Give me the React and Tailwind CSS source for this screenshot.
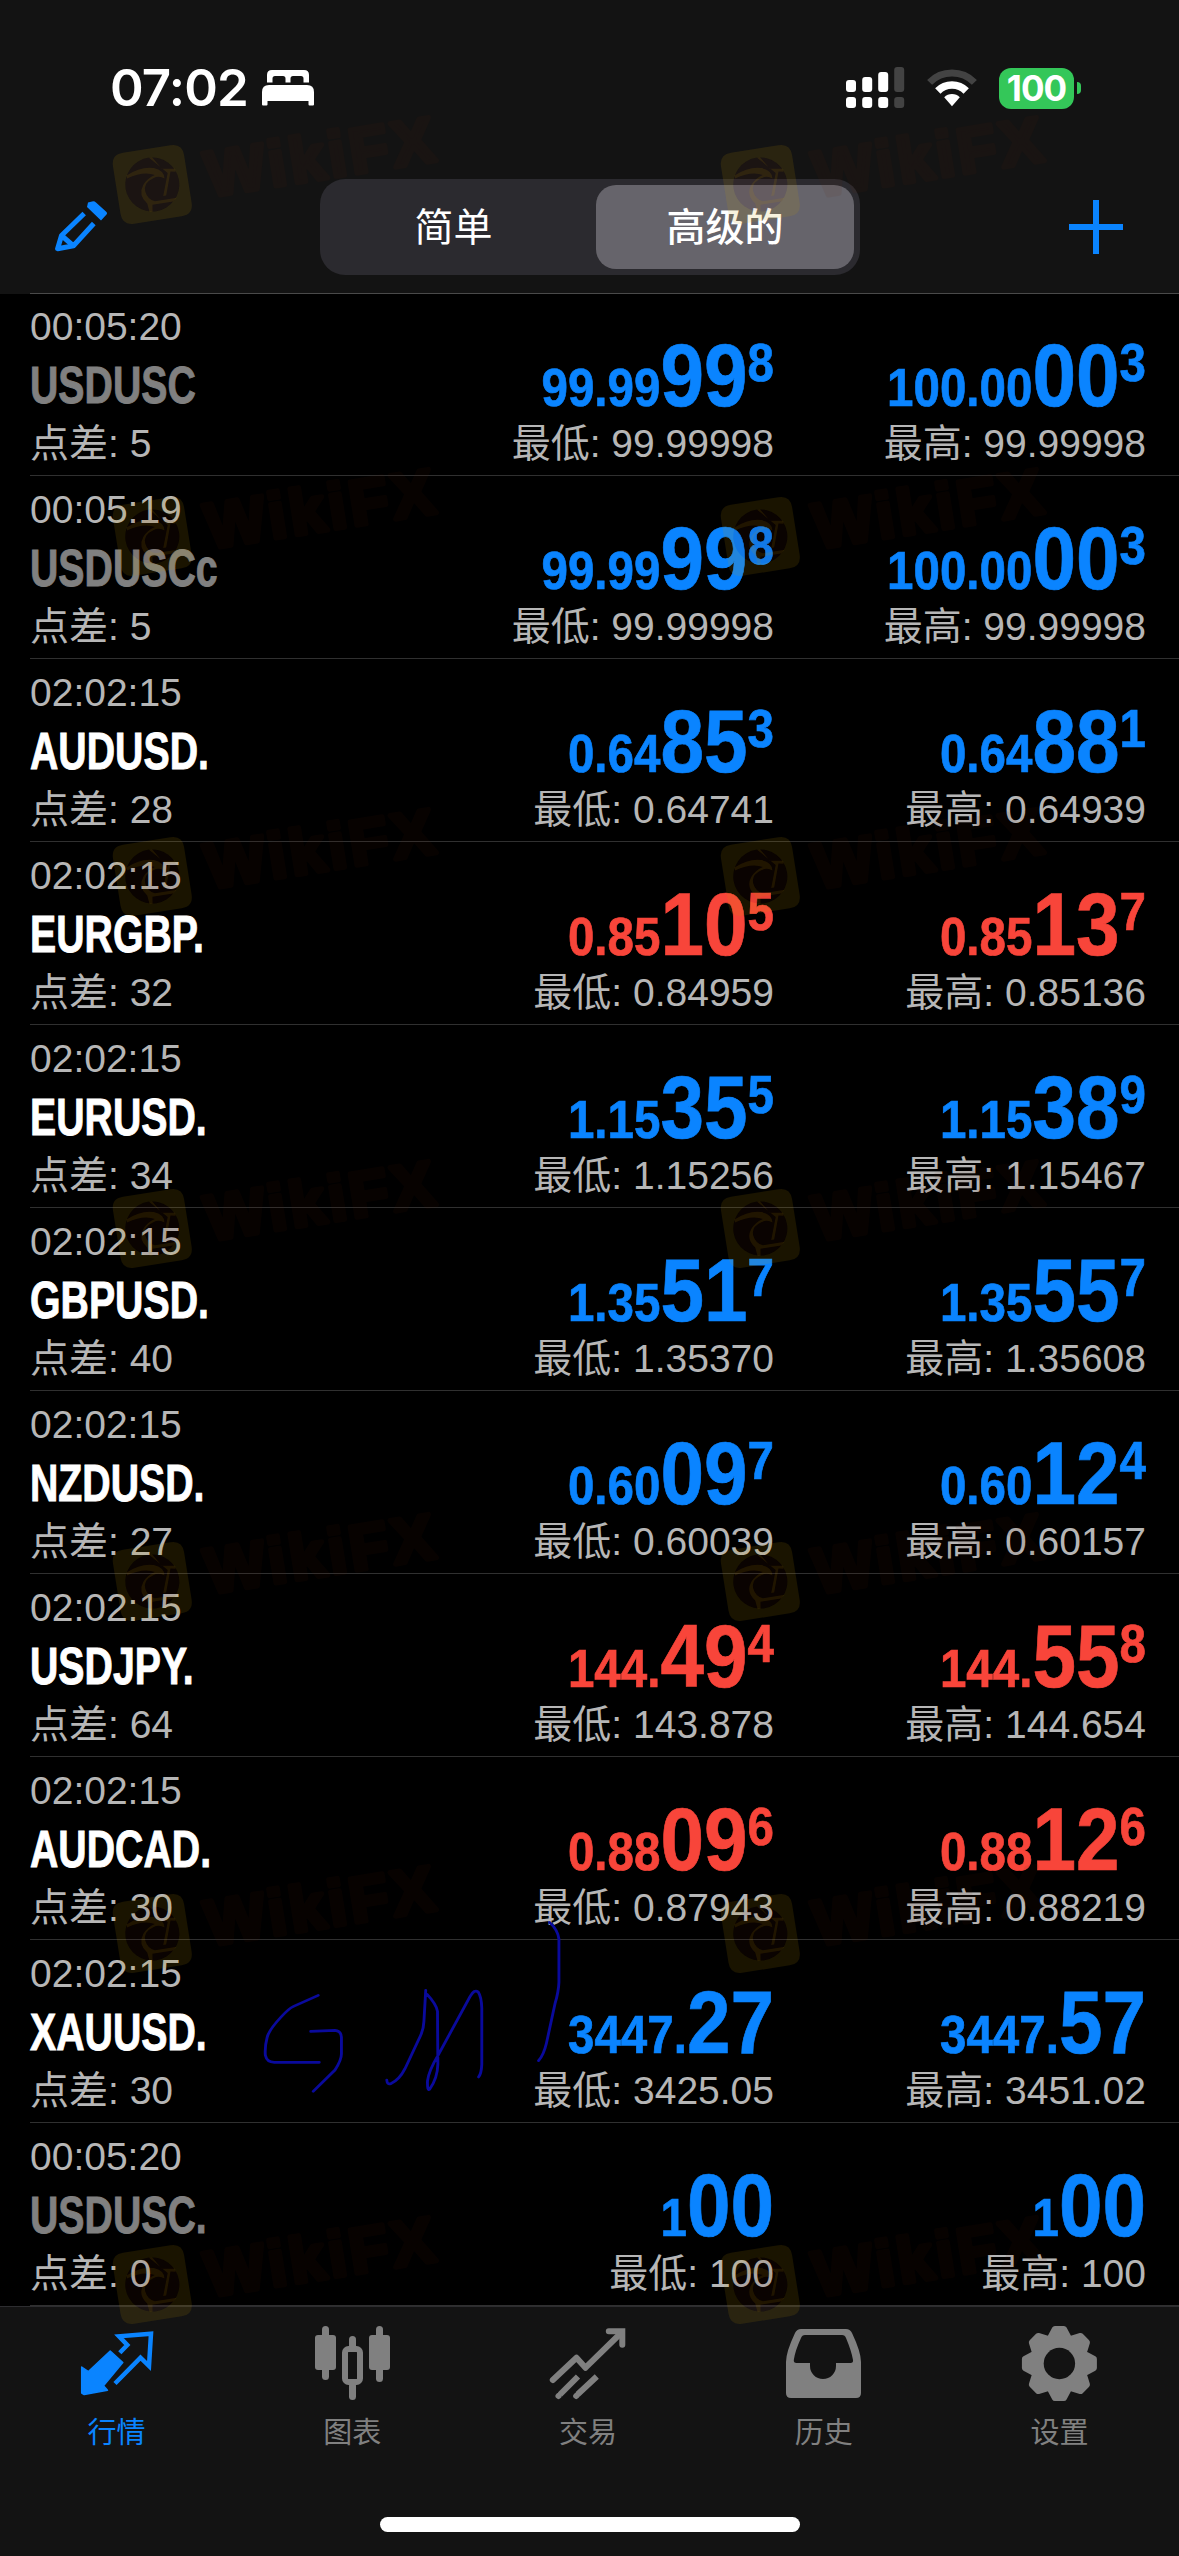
import React from "react";

const quotes = [
  { time: "00:05:20", symbol: "USDUSC", spread: "5", dim: true, bid: ["99.99", "99", "8"], ask: ["100.00", "00", "3"], low: "99.99998", high: "99.99998" },
  { time: "00:05:19", symbol: "USDUSCc", spread: "5", dim: true, bid: ["99.99", "99", "8"], ask: ["100.00", "00", "3"], low: "99.99998", high: "99.99998" },
  { time: "02:02:15", symbol: "AUDUSD.", spread: "28", bid: ["0.64", "85", "3"], ask: ["0.64", "88", "1"], low: "0.64741", high: "0.64939" },
  { time: "02:02:15", symbol: "EURGBP.", spread: "32", down: true, bid: ["0.85", "10", "5"], ask: ["0.85", "13", "7"], low: "0.84959", high: "0.85136" },
  { time: "02:02:15", symbol: "EURUSD.", spread: "34", bid: ["1.15", "35", "5"], ask: ["1.15", "38", "9"], low: "1.15256", high: "1.15467" },
  { time: "02:02:15", symbol: "GBPUSD.", spread: "40", bid: ["1.35", "51", "7"], ask: ["1.35", "55", "7"], low: "1.35370", high: "1.35608" },
  { time: "02:02:15", symbol: "NZDUSD.", spread: "27", bid: ["0.60", "09", "7"], ask: ["0.60", "12", "4"], low: "0.60039", high: "0.60157" },
  { time: "02:02:15", symbol: "USDJPY.", spread: "64", down: true, bid: ["144.", "49", "4"], ask: ["144.", "55", "8"], low: "143.878", high: "144.654" },
  { time: "02:02:15", symbol: "AUDCAD.", spread: "30", down: true, bid: ["0.88", "09", "6"], ask: ["0.88", "12", "6"], low: "0.87943", high: "0.88219" },
  { time: "02:02:15", symbol: "XAUUSD.", spread: "30", bid: ["3447.", "27", ""], ask: ["3447.", "57", ""], low: "3425.05", high: "3451.02" },
  { time: "00:05:20", symbol: "USDUSC.", spread: "0", dim: true, bid: ["1", "00", ""], ask: ["1", "00", ""], low: "100", high: "100" },
];

const watermarkRows = [144, 496, 836, 1188, 1541, 1893, 2244];
const watermarkCols = [112, 720];

function BedIcon() {
  return (
    <svg width="52" height="36" viewBox="0 0 52 36" fill="#fff">
      <path d="M5 12.5V5q0-5 5-5h32q5 0 5 5v7.500h-5.500V8.500q0-2.500-2.500-2.500h-8q-2.500 0-2.500 2.500v4h-5v-4q0-2.500-2.500-2.500h-8q-2.500 0-2.500 2.500v4z" />
      <path d="M0 22q0-7 7-7h38q7 0 7 7v12.500q0 1-1 1h-3.500q-1 0-1-1V31h-41v3.500q0 1-1 1H1q-1 0-1-1z" />
    </svg>
  );
}

function SignalIcon() {
  return (
    <svg width="59" height="42" viewBox="0 0 59 42" fill="#fff">
      <rect x="0" y="13" width="10" height="12" rx="3" />
      <rect x="16.200" y="10" width="10" height="15" rx="3" />
      <rect x="32.200" y="5" width="10" height="20" rx="3" />
      <rect x="48.200" y="0" width="10" height="25" rx="3" fill="#434343" />
      <rect x="0" y="30" width="10" height="11" rx="3" />
      <rect x="16.200" y="30" width="10" height="11" rx="3" />
      <rect x="32.200" y="30" width="10" height="11" rx="3" />
      <rect x="48.200" y="30" width="10" height="11" rx="3" fill="#434343" />
    </svg>
  );
}

function WifiIcon() {
  return (
    <svg width="50" height="38" viewBox="0 0 50 38" fill="none">
      <path d="M2.600 13.400A31.500 31.500 0 0 1 47.400 13.400" stroke="#434343" strokeWidth="7" />
      <path d="M10.800 22A20 20 0 0 1 39.200 22" stroke="#fff" strokeWidth="7.500" />
      <path d="M17.200 28.200a11 11 0 0 1 15.600 0L25 37.200z" fill="#fff" />
    </svg>
  );
}

function PencilIcon() {
  return (
    <svg width="54" height="52" viewBox="0 0 54 52" fill="none">
      <path d="M33 1.600L37 0.500Q39 -0.500 41 1.500L51.500 11Q52.500 12.500 51.500 13.500L46 19.500L32 6z" fill="#0a84ff" />
      <path d="M29.200 12.500L6.500 34.500L2.600 47.700L18.500 44.700L38.800 22.500M6.500 34.500L18 44.500" stroke="#0a84ff" strokeWidth="5" strokeLinejoin="round" />
    </svg>
  );
}

function QuotesIcon() {
  return (
    <svg width="84" height="84" viewBox="0 0 84 84" fill="none">
      <path d="M5.700 43L12.400 47.500L34.200 27L46.800 38.500L27.500 61.700L31.500 66.200L8.200 70.500L5.700 69z" fill="#0a84ff" stroke="#0a84ff" strokeWidth="1.500" strokeLinejoin="round" />
      <path d="M43.800 28.700L51.300 21L43 12.300L75 9.700L73 42L64.500 33.700L39 59.500" stroke="#0a84ff" strokeWidth="4.500" />
    </svg>
  );
}

function ChartIcon() {
  return (
    <svg width="84" height="84" viewBox="0 0 84 84" fill="#808080">
      <rect x="10" y="2" width="7" height="54" rx="3.500" />
      <rect x="3" y="11" width="21" height="35" rx="3" />
      <rect x="64" y="2" width="7" height="56" rx="3.500" />
      <rect x="57" y="11" width="21" height="35" rx="3" />
      <rect x="37" y="12" width="7" height="14" rx="3.500" />
      <rect x="37" y="58" width="7" height="18" rx="3.500" />
      <rect x="33" y="25" width="15" height="33" rx="3.500" fill="none" stroke="#808080" strokeWidth="6" />
    </svg>
  );
}

function TradeIcon() {
  return (
    <svg width="84" height="84" viewBox="0 0 84 84" fill="none" stroke="#808080" strokeWidth="6">
      <path d="M5.800 56L29.500 33.700L38.500 43.700L74.500 8.500" strokeLinecap="round" strokeLinejoin="round" />
      <path d="M61.800 7.300H75.300V20.700" strokeLinecap="round" />
      <path d="M13 70.500L31 52.500M30.500 70.500L49.800 52.500" />
      <path d="M11.500 72l.1-.1M29.200 72l.1-.1" strokeLinecap="round" />
    </svg>
  );
}

function HistoryIcon() {
  return (
    <svg width="84" height="84" viewBox="0 0 84 84" fill="#808080">
      <path
        fillRule="evenodd"
        d="M3 69V38Q3 28 12 9Q14 5 18 5H63Q67 5 69 9Q78 28 78 38V69Q78 74 73 74H8Q3 74 3 69zM22 11Q19 11 18 14Q12 27 10.800 36Q10.500 39 13.500 39H27V42A13 13 0 0 0 53 42V39H67.500Q70.500 39 70 36Q68.500 27 63 14Q62 11 59 11z"
      />
    </svg>
  );
}

function SettingsIcon() {
  return (
    <svg width="84" height="84" viewBox="0 0 84 84">
      <g transform="translate(40.400 39.500)" fill="#808080" stroke="#808080" strokeLinejoin="round">
        <circle r="30" stroke="none" />
        {[0, 45, 90, 135, 180, 225, 270, 315].map((a) => (
          <path key={a} transform={`rotate(${a})`} d="M-8.500 -27L-4.500 -34.500H4.500L8.500 -27z" strokeWidth="6" />
        ))}
        <circle r="15.700" fill="#131313" stroke="none" />
      </g>
    </svg>
  );
}

const tabs = [
  { label: "行情", Icon: QuotesIcon, active: true },
  { label: "图表", Icon: ChartIcon },
  { label: "交易", Icon: TradeIcon },
  { label: "历史", Icon: HistoryIcon },
  { label: "设置", Icon: SettingsIcon },
];

function StatusBar() {
  return (
    <div className="flex h-[176px] items-start justify-between pl-[110px] pr-[98px] pt-[66px]">
      <div className="flex h-[44px] items-center">
        <span className="w-[139px] whitespace-nowrap font-['Inter'] text-[51px] font-semibold leading-[44px] tracking-[-0.8px] text-white">07:02</span>
        <span className="ml-[13px]"><BedIcon /></span>
      </div>
      <div className="flex h-[44px] items-center">
        <SignalIcon />
        <span className="ml-[22px] mr-[22px]"><WifiIcon /></span>
        <div className="flex h-[41px] w-[75px] items-center justify-center rounded-[12px] bg-[#34c759] font-['Inter'] text-[35px] font-bold leading-none tracking-[-1px] text-white">100</div>
        <div className="ml-[3px] h-[12px] w-[4px] rounded-r-full bg-[#34c759]" />
      </div>
    </div>
  );
}

function Toolbar() {
  return (
    <div className="flex items-center justify-between pl-[55px] pr-[56px] pt-[3px]">
      <PencilIcon />
      <div className="ml-[2px] flex h-[96px] w-[540px] rounded-[25px] bg-[#2b2a2f] p-[6px] text-[39px] text-white">
        <div className="flex w-[270px] items-center justify-center pr-[15px] pt-[2px]">简单</div>
        <div className="flex w-[258px] items-center justify-center rounded-[20px] bg-[#66646b] pt-[2px] font-medium">高级的</div>
      </div>
      <svg width="54" height="54" viewBox="0 0 54 54" fill="#0a84ff">
        <path d="M24 0h6v24h24v6H30v24h-6V30H0v-6h24z" />
      </svg>
    </div>
  );
}

function Price({ parts, down }) {
  return (
    <div className={`h-[90px] origin-right scale-x-[0.88] whitespace-nowrap text-right text-[54px] font-bold leading-[90px] [-webkit-text-stroke:0.7px_currentColor] ${down ? "text-[#f8453a]" : "text-[#0a84ff]"}`}>
      <span>{parts[0]}</span>
      <span className="text-[89px]">{parts[1]}</span>
      {parts[2] && <span className="align-[25px] leading-none">{parts[2]}</span>}
    </div>
  );
}

function QuoteRow({ q }) {
  return (
    <div className="ml-[30px] flex h-[183px] border-b border-[#303030] text-[39px] leading-[46px] text-[#b6b6b6]">
      <div className="w-[300px] pt-[11px]">
        <div>{q.time}</div>
        <div className={`mt-[6px] origin-left scale-x-[0.77] whitespace-nowrap text-[51px] font-bold leading-[60px] [-webkit-text-stroke:0.9px_currentColor] ${q.dim ? "text-[#808080]" : "text-white"}`}>{q.symbol}</div>
        <div className="mt-[5px]">点差: {q.spread}</div>
      </div>
      <div className="w-[444px] pt-[37px] text-right">
        <Price parts={q.bid} down={q.down} />
        <div className="mt-px">最低: {q.low}</div>
      </div>
      <div className="w-[372px] pt-[37px] text-right">
        <Price parts={q.ask} down={q.down} />
        <div className="mt-px">最高: {q.high}</div>
      </div>
    </div>
  );
}

function Watermark({ left, top }) {
  return (
    <svg className="pointer-events-none absolute" style={{ left: left - 10, top: top - 50 }} width="350" height="150" viewBox="0 0 350 150">
      <g transform="translate(50.300 90.500) rotate(-9)">
        <path
          opacity="0.13"
          fill="#c89a00"
          fillRule="evenodd"
          d="M-24 -36H24Q36 -36 36 -24V24Q36 36 24 36H-24Q-36 36 -36 24V-24Q-36 -36 -24 -36zM0 -27A27 27 0 1 0 0 27A27 27 0 1 0 0 -27z"
        />
        <circle r="27" fill="#5e2008" opacity="0.1" />
        <path
          opacity="0.12"
          fill="#c89a00"
          d="M-24 -13Q-8 -20 4 -16Q14 -12 13 -4Q8 -8 2 -6Q-9 -3 -8 6Q-7 14 0 17L22 17L18 20H-3L-4 27H-7L-8 18Q-16 8 -9 -1Q-4 -7 4 -9Q-6 -15 -24 -10zM4 -27L12 -14L25 -12L25 -9L20 -10L12 13L9 13L17 -9L1 -27z"
        />
        <g opacity="0.08">
          <text x="54" y="21" fill="#5e2008" stroke="#5e2008" strokeWidth="5" strokeLinejoin="round" fontSize="64" fontWeight="700" textLength="231" fontFamily="Liberation Sans, sans-serif">WikiFX</text>
        </g>
      </g>
    </svg>
  );
}

function Scribble() {
  return (
    <svg className="pointer-events-none absolute left-[240px] top-[1900px]" width="560" height="300" viewBox="0 0 1568 900" preserveAspectRatio="none" fill="none" stroke="#0a0a9c" strokeLinecap="round" strokeLinejoin="round">
      <g strokeWidth="8">
        <path d="M219 286L150 319Q137 325 115 351Q81 390 76 412Q69 440 71 466Q75 487 96 487H222M198 394L266 391Q283 392 284 412V462Q284 480 266 510L205 574" />
        <path d="M411 540Q412 555 422 551Q446 540 462 506L502 415Q514 390 515 364L520 271M524 283Q550 313 553 334L554 493Q553 535 531 568Q524 574 525 543Q528 513 556 463L644 290Q656 266 667 276Q676 290 677 325V493Q676 520 668 531" />
        <path d="M867 67Q890 90 893 117V247Q892 275 882 311L858 430Q850 466 836 482" />
      </g>
    </svg>
  );
}

function TabBar() {
  return (
    <div className="h-[250px] border-t border-[#2d2d30] bg-[#131313]">
      <div className="grid grid-cols-5 pt-[17px]">
        {tabs.map(({ label, Icon, active }) => (
          <div key={label} className="flex flex-col items-center">
            <Icon />
            <span className={`mt-[5px] pr-[3px] text-[29px] leading-[40px] ${active ? "text-[#0a84ff]" : "text-[#808080]"}`}>{label}</span>
          </div>
        ))}
      </div>
      <div className="mx-auto mt-[64px] h-[15px] w-[420px] rounded-full bg-white" />
    </div>
  );
}

export default function App() {
  return (
    <div className="relative h-[2556px] w-[1179px] overflow-hidden bg-black font-['Liberation_Sans','Noto_Sans_CJK_SC',sans-serif]">
      <header className="flex h-[294px] flex-col bg-[#131313]">
        <StatusBar />
        <Toolbar />
        <div className="ml-[30px] mt-auto h-px bg-[#4a4a4a]" />
      </header>
      <main className="-mt-px">
        {quotes.map((q, i) => (
          <QuoteRow key={i} q={q} />
        ))}
      </main>
      <TabBar />
      {watermarkRows.map((top) => watermarkCols.map((left) => <Watermark key={`${top}-${left}`} left={left} top={top} />))}
      <Scribble />
    </div>
  );
}
